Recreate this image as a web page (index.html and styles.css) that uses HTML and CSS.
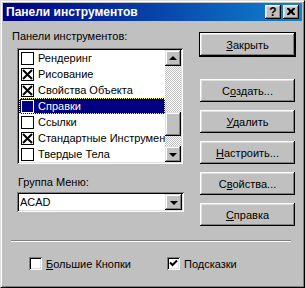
FILE: index.html
```html
<!DOCTYPE html>
<html>
<head>
<meta charset="utf-8">
<link rel="stylesheet" href="styles.css">
</head>
<body>
<div class="window">
  <div class="titlebar">
    <span class="title">Панели инструментов</span>
    <div class="cap-btns">
      <div class="cap-btn help">?</div>
      <div class="cap-btn close">
        <svg width="8" height="7" viewBox="0 0 8 7"><path d="M0 0h2l2 2 2-2h2v1l-2 2v1l2 2v1h-2l-2-2-2 2h-2v-1l2-2v-1l-2-2z" fill="#000"/></svg>
      </div>
    </div>
  </div>
  <div class="content">
    <div class="main">
      <div class="left">
        <div class="label">Панели инструментов:</div>
        <div class="listbox">
          <div class="items">
            <div class="item"><span class="lcb"></span><span class="txt">Рендеринг</span></div>
            <div class="item"><span class="lcb checked"><svg width="11" height="11" viewBox="0 0 11 11"><path d="M1 1L10 10M10 1L1 10" stroke="#000" stroke-width="2"/></svg></span><span class="txt">Рисование</span></div>
            <div class="item"><span class="lcb checked"><svg width="11" height="11" viewBox="0 0 11 11"><path d="M1 1L10 10M10 1L1 10" stroke="#000" stroke-width="2"/></svg></span><span class="txt">Свойства Объекта</span></div>
            <div class="item selected"><span class="lcb"></span><span class="txt">Справки</span></div>
            <div class="item"><span class="lcb"></span><span class="txt">Ссылки</span></div>
            <div class="item"><span class="lcb checked"><svg width="11" height="11" viewBox="0 0 11 11"><path d="M1 1L10 10M10 1L1 10" stroke="#000" stroke-width="2"/></svg></span><span class="txt">Стандартные Инструменты</span></div>
            <div class="item"><span class="lcb"></span><span class="txt">Твердые Тела</span></div>
          </div>
          <div class="scrollbar">
            <div class="sb-btn"><span class="arrow up"></span></div>
            <div class="track"><div class="thumb"></div></div>
            <div class="sb-btn"><span class="arrow down"></span></div>
          </div>
        </div>
        <div class="label group">Группа Меню:</div>
        <div class="combo">
          <span class="combo-text">ACAD</span>
          <div class="sb-btn combo-btn"><span class="arrow down"></span></div>
        </div>
      </div>
      <div class="right">
        <div class="default-ring"><div class="btn"><span><u>З</u>акрыть</span></div></div>
        <div class="btn first"><span>С<u>о</u>здать...</span></div>
        <div class="btn"><span><u>У</u>далить</span></div>
        <div class="btn"><span><u>Н</u>астроить...</span></div>
        <div class="btn"><span>С<u>в</u>ойства...</span></div>
        <div class="btn"><span><u>С</u>правка</span></div>
      </div>
    </div>
    <div class="separator"></div>
    <div class="options">
      <div class="opt wide"><span class="cb"></span><span><u>Б</u>ольшие Кнопки</span></div>
      <div class="opt"><span class="cb"><svg width="9" height="9" viewBox="0 0 9 9"><path d="M1 3.5L3.5 6L8 1.5" stroke="#000" stroke-width="2" fill="none"/></svg></span><span>Подсказки</span></div>
    </div>
  </div>
</div>
</body>
</html>
```

FILE: styles.css
```css
* { box-sizing: border-box; }
html, body { margin: 0; padding: 0; }
body {
  width: 305px;
  height: 288px;
  font-family: "Liberation Sans", Arial, sans-serif;
  font-size: 11px;
  color: #000;
  background: #c0c0c0;
}
.window {
  width: 305px;
  height: 288px;
  background: #c0c0c0;
  border: 1px solid;
  border-color: #dfdfdf #000 #000 #dfdfdf;
  box-shadow: inset 1px 1px #fff, inset -1px -1px #808080;
  padding: 2px;
  display: flex;
  flex-direction: column;
}
.titlebar {
  height: 18px;
  background: linear-gradient(to right, #000080, #1084d0);
  display: flex;
  align-items: center;
  padding: 0 3px 0 3px;
}
.title {
  flex: 1;
  color: #fff;
  font-weight: bold;
  font-size: 12px;
  white-space: nowrap;
}
.cap-btns { display: flex; gap: 2px; }
.cap-btn {
  width: 16px;
  height: 14px;
  background: #c0c0c0;
  box-shadow: inset -1px -1px #000, inset 1px 1px #fff, inset -2px -2px #808080, inset 2px 2px #dfdfdf;
  display: flex;
  align-items: center;
  justify-content: center;
}
.help { font-weight: bold; font-size: 12px; line-height: 14px; padding-bottom: 1px; }
.close svg { display: block; margin-top: -1px; }
.content {
  flex: 1;
  padding-left: 9px;
  display: flex;
  flex-direction: column;
}
.main { display: flex; align-items: flex-start; }
.left { width: 175px; display: flex; flex-direction: column; }
.label {
  height: 13px;
  line-height: 13px;
  margin-top: 9px;
  white-space: nowrap;
}
.label.group { margin-top: 12px; margin-left: 6px; }
.listbox {
  margin: 5px 0 0 5px;
  width: 166px;
  height: 116px;
  padding: 2px;
  background: #fff;
  box-shadow: inset 1px 1px #808080, inset -1px -1px #fff, inset 2px 2px #000, inset -2px -2px #dfdfdf;
  display: flex;
}
.items { flex: 1; overflow: hidden; }
.item {
  height: 16px;
  display: flex;
  align-items: center;
  padding-left: 2px;
  white-space: nowrap;
}
.item.selected {
  background: #000080;
  color: #fff;
  outline: 1px dotted #ffff80;
  outline-offset: -1px;
}
.lcb {
  width: 13px;
  height: 13px;
  flex: none;
  border: 1px solid #000;
  background: #fff;
  display: flex;
}
.item.selected .lcb { background: #000080; border-color: #fff; }
.lcb svg { display: block; margin: 0; }
.txt { margin-left: 4px; }
.scrollbar {
  width: 16px;
  display: flex;
  flex-direction: column;
}
.sb-btn {
  width: 16px;
  height: 16px;
  flex: none;
  background: #c0c0c0;
  box-shadow: inset -1px -1px #000, inset 1px 1px #dfdfdf, inset -2px -2px #808080, inset 2px 2px #fff;
  display: flex;
  align-items: center;
  justify-content: center;
}
.track {
  flex: 1;
  background: repeating-conic-gradient(#c0c0c0 0 25%, #fff 0 50%) 0 0 / 2px 2px;
}
.thumb {
  margin-top: 46px;
  height: 24px;
  background: #c0c0c0;
  box-shadow: inset -1px -1px #000, inset 1px 1px #dfdfdf, inset -2px -2px #808080, inset 2px 2px #fff;
}
.arrow { width: 0; height: 0; border-left: 4px solid transparent; border-right: 4px solid transparent; }
.arrow.up { border-bottom: 4px solid #000; margin-top: -1px; }
.arrow.down { border-top: 4px solid #000; margin-top: 1px; }
.combo {
  margin: 3px 0 0 5px;
  width: 167px;
  height: 20px;
  padding: 2px;
  background: #fff;
  box-shadow: inset 1px 1px #808080, inset -1px -1px #fff, inset 2px 2px #000, inset -2px -2px #dfdfdf;
  display: flex;
  align-items: center;
}
.combo-text { flex: 1; padding-left: 1px; }
.combo-btn { width: 17px; height: 16px; }
.right {
  margin-left: 12px;
  margin-top: 11px;
  display: flex;
  flex-direction: column;
}
.default-ring { border: 1px solid #000; width: 97px; }
.btn {
  width: 95px;
  height: 23px;
  margin-top: 8px;
  margin-left: 1px;
  background: #c0c0c0;
  box-shadow: inset -1px -1px #000, inset 1px 1px #fff, inset -2px -2px #808080, inset 2px 2px #dfdfdf;
  display: flex;
  align-items: center;
  justify-content: center;
  white-space: nowrap;
}
.default-ring .btn { margin: 0; }
.btn.first { margin-top: 22px; }
.separator {
  margin-top: 14px;
  margin-left: -1px;
  width: 280px;
  height: 2px;
  border-top: 1px solid #808080;
  border-bottom: 1px solid #fff;
}
.options {
  margin-top: 15px;
  padding-left: 17px;
  display: flex;
}
.opt { display: flex; align-items: center; gap: 4px; white-space: nowrap; }
.opt.wide { width: 138px; }
.cb {
  width: 13px;
  height: 13px;
  flex: none;
  background: #fff;
  box-shadow: inset 1px 1px #808080, inset -1px -1px #fff, inset 2px 2px #000, inset -2px -2px #dfdfdf;
  display: flex;
  align-items: center;
  justify-content: center;
}
.cb svg { display: block; }
```
